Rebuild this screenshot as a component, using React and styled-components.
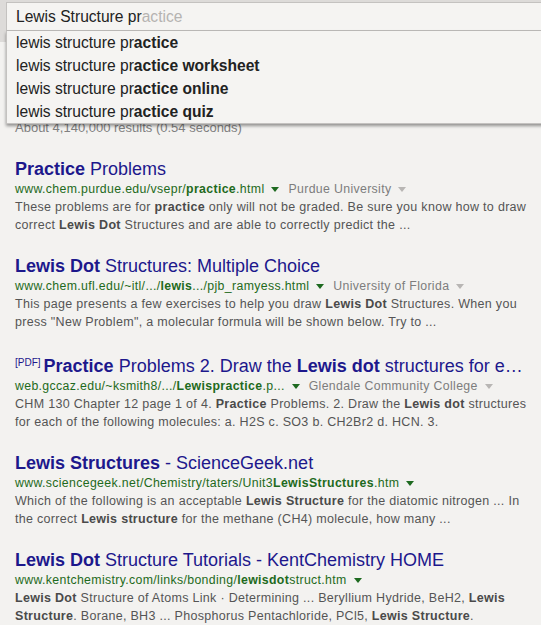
import React from 'react';
import styled, { createGlobalStyle } from 'styled-components';

const GlobalStyle = createGlobalStyle`
  body {
    margin: 0;
    background: #f3f2f0;
    font-family: "Liberation Sans", Arial, sans-serif;
    overflow: hidden;
  }
`;

const Page = styled.div`
  width: 541px;
  height: 625px;
  overflow: hidden;
  position: relative;
`;

const Header = styled.div`
  position: relative;
  height: 42px;
  background: #dddbd9;
  padding: 2px 0 0 6px;
  box-sizing: border-box;
`;

const SearchBox = styled.div`
  height: 29px;
  margin-right: -10px;
  border: 1px solid #c4c2c0;
  border-bottom-color: #bdbbb9;
  background: #f5f4f2;
  box-sizing: border-box;
  padding-left: 9px;
  display: flex;
  align-items: center;
  font-size: 15.6px;
  color: #222;
`;

const Hint = styled.span`
  color: #b5b3b1;
`;

const Dropdown = styled.ul`
  position: absolute;
  top: 31px;
  left: 6px;
  right: -10px;
  margin: 0;
  padding: 0;
  list-style: none;
  background: #f5f4f2;
  border: 1px solid #c4c2c0;
  border-top: none;
  box-shadow: 0 2px 3px rgba(0, 0, 0, 0.4);
  z-index: 2;
`;

const Suggestion = styled.li`
  height: 23px;
  line-height: 23px;
  padding-left: 9px;
  font-size: 15.6px;
  color: #222;
  b {
    font-weight: bold;
  }
`;

const Main = styled.div`
  padding: 78px 0 0 15px;
`;

const Stats = styled.div`
  font-size: 13px;
  line-height: 16px;
  color: #808080;
  margin-bottom: 22px;
`;

const Result = styled.div`
  margin-bottom: 21px;
`;

const Title = styled.div`
  font-size: 18px;
  line-height: 22px;
  color: #1d188c;
  white-space: nowrap;
  b {
    font-weight: bold;
  }
`;

const Tag = styled.span`
  font-size: 10px;
  vertical-align: 6px;
  margin-right: 3px;
  color: #1d188c;
`;

const UrlLine = styled.div`
  display: flex;
  align-items: center;
  font-size: 12.3px;
  line-height: 18px;
  letter-spacing: 0.35px;
  white-space: nowrap;
`;

const Url = styled.span`
  color: #1e6a20;
  b {
    font-weight: bold;
  }
`;

const Caret = styled.span`
  display: inline-block;
  width: 0;
  height: 0;
  border-left: 4px solid transparent;
  border-right: 4px solid transparent;
  border-top: 5px solid ${p => (p.$muted ? '#b8b6b4' : '#1e6a20')};
  margin: 1px 9px 0 7px;
`;

const Source = styled.span`
  color: #7d7d7d;
`;

const Snippet = styled.div`
  font-size: 12.5px;
  line-height: 18px;
  color: #555;
  letter-spacing: 0.3px;
  white-space: nowrap;
  b {
    font-weight: bold;
    color: #4a4a4a;
  }
`;

const suggestions = ['', ' worksheet', ' online', ' quiz'];

export default function App() {
  return (
    <Page>
      <GlobalStyle />
      <Header>
        <SearchBox>
          Lewis Structure pr<Hint>actice</Hint>
        </SearchBox>
        <Dropdown>
          {suggestions.map((s, i) => (
            <Suggestion key={i}>
              lewis structure pr<b>actice{s}</b>
            </Suggestion>
          ))}
        </Dropdown>
      </Header>

      <Main>
        <Stats>About 4,140,000 results (0.54 seconds)</Stats>

        <Result>
          <Title><b>Practice</b> Problems</Title>
          <UrlLine>
            <Url>www.chem.purdue.edu/vsepr/<b>practice</b>.html</Url>
            <Caret />
            <Source>Purdue University</Source>
            <Caret $muted />
          </UrlLine>
          <Snippet>
            These problems are for <b>practice</b> only will not be graded. Be sure you know how to draw
            <br />
            correct <b>Lewis Dot</b> Structures and are able to correctly predict the ...
          </Snippet>
        </Result>

        <Result>
          <Title><b>Lewis Dot</b> Structures: Multiple Choice</Title>
          <UrlLine>
            <Url>www.chem.ufl.edu/~itl/.../<b>lewis</b>.../pjb_ramyess.html</Url>
            <Caret />
            <Source>University of Florida</Source>
            <Caret $muted />
          </UrlLine>
          <Snippet>
            This page presents a few exercises to help you draw <b>Lewis Dot</b> Structures. When you
            <br />
            press "New Problem", a molecular formula will be shown below. Try to ...
          </Snippet>
        </Result>

        <Result>
          <Title>
            <Tag>[PDF]</Tag><b>Practice</b> Problems 2. Draw the <b>Lewis dot</b> structures for e…
          </Title>
          <UrlLine>
            <Url>web.gccaz.edu/~ksmith8/.../<b>Lewispractice</b>.p...</Url>
            <Caret />
            <Source>Glendale Community College</Source>
            <Caret $muted />
          </UrlLine>
          <Snippet>
            CHM 130 Chapter 12 page 1 of 4. <b>Practice</b> Problems. 2. Draw the <b>Lewis dot</b> structures
            <br />
            for each of the following molecules: a. H2S c. SO3 b. CH2Br2 d. HCN. 3.
          </Snippet>
        </Result>

        <Result>
          <Title><b>Lewis Structures</b> - ScienceGeek.net</Title>
          <UrlLine>
            <Url>www.sciencegeek.net/Chemistry/taters/Unit3<b>LewisStructures</b>.htm</Url>
            <Caret />
          </UrlLine>
          <Snippet>
            Which of the following is an acceptable <b>Lewis Structure</b> for the diatomic nitrogen ... In
            <br />
            the correct <b>Lewis structure</b> for the methane (CH4) molecule, how many ...
          </Snippet>
        </Result>

        <Result>
          <Title><b>Lewis Dot</b> Structure Tutorials - KentChemistry HOME</Title>
          <UrlLine>
            <Url>www.kentchemistry.com/links/bonding/<b>lewisdot</b>struct.htm</Url>
            <Caret />
          </UrlLine>
          <Snippet>
            <b>Lewis Dot</b> Structure of Atoms Link · Determining ... Beryllium Hydride, BeH2, <b>Lewis</b>
            <br />
            <b>Structure</b>. Borane, BH3 ... Phosphorus Pentachloride, PCl5, <b>Lewis Structure</b>.
          </Snippet>
        </Result>
      </Main>
    </Page>
  );
}
